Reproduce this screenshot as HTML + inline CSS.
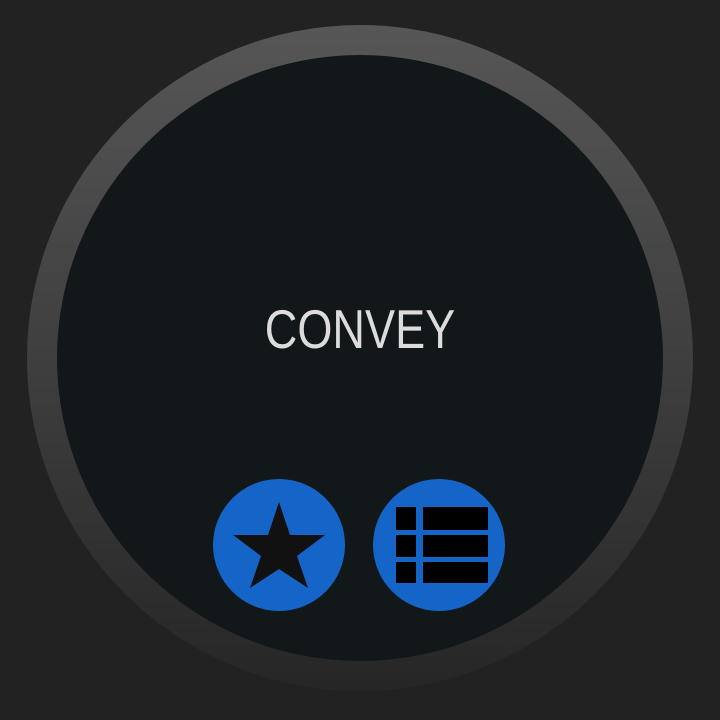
<!DOCTYPE html>
<html><head><style>
html,body{margin:0;padding:0;background:#222;width:720px;height:720px;overflow:hidden}
.ring{position:absolute;left:27px;top:25px;width:666px;height:666px;border-radius:50%;background:linear-gradient(#565656,#3a3a3a 60%,#262626)}
.face{position:absolute;left:57px;top:55px;width:606px;height:606px;border-radius:50%;background:#12171a}
.t{position:absolute;left:0;width:720px;top:298px;text-align:center;font-family:"Liberation Sans",sans-serif;font-size:55px;color:#dcdcdc;transform:scaleX(0.82);line-height:62px}
svg{position:absolute;left:0;top:0}
</style></head><body>
<div class="ring"></div><div class="face"></div>
<div class="t">CONVEY</div>
<svg width="720" height="720">
<circle cx="279" cy="545" r="66" fill="#1565c8"/>
<circle cx="439" cy="545" r="66" fill="#1565c8"/>
<polygon fill="#111" points="279,502 290,535 325,535 297,556 308,588 279,569 250,588 261,556 233,535 268,535"/>
<g fill="#000">
<rect x="396" y="507" width="20" height="23"/><rect x="423" y="507" width="65" height="23"/>
<rect x="396" y="535" width="20" height="22"/><rect x="423" y="535" width="65" height="22"/>
<rect x="396" y="562" width="20" height="21"/><rect x="423" y="562" width="65" height="21"/>
</g>
</svg>
</body></html>
